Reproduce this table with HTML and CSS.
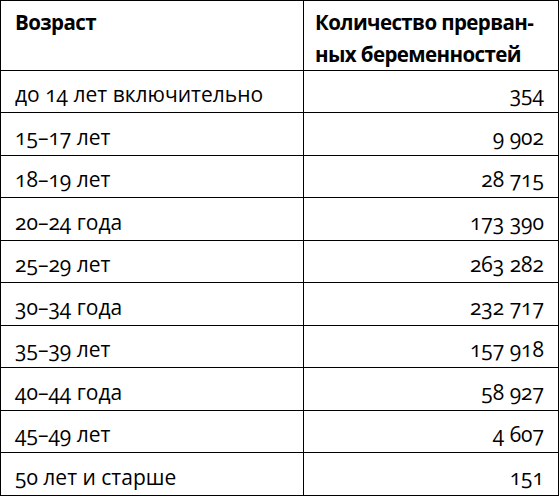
FILE: index.html
```html
<!DOCTYPE html>
<html lang="ru">
<head>
<meta charset="utf-8">
<link rel="stylesheet" href="styles.css">
</head>
<body>
<table class="stats">
  <thead>
    <tr class="head-row">
      <th class="col-age">Возраст</th>
      <th class="col-count">Количество прерван-<br>ных беременностей</th>
    </tr>
  </thead>
  <tbody>
    <tr><td class="age">до 14 лет включительно</td><td class="num">354</td></tr>
    <tr><td class="age">15–17 лет</td><td class="num">9 902</td></tr>
    <tr><td class="age">18–19 лет</td><td class="num">28 715</td></tr>
    <tr><td class="age">20–24 года</td><td class="num">173 390</td></tr>
    <tr><td class="age">25–29 лет</td><td class="num">263 282</td></tr>
    <tr><td class="age">30–34 года</td><td class="num">232 717</td></tr>
    <tr><td class="age">35–39 лет</td><td class="num">157 918</td></tr>
    <tr><td class="age">40–44 года</td><td class="num">58 927</td></tr>
    <tr><td class="age">45–49 лет</td><td class="num">4 607</td></tr>
    <tr><td class="age">50 лет и старше</td><td class="num">151</td></tr>
  </tbody>
</table>
</body>
</html>
```
FILE: styles.css
```css
html, body {
  margin: 0;
  padding: 0;
  background: #fff;
}
body {
  font-family: "Open Sans", "Noto Sans", sans-serif;
  color: #000;
}
.stats {
  border-collapse: collapse;
  width: 559px;
  table-layout: fixed;
  border: 1.5px solid #000;
}
.stats th, .stats td {
  border: 1.2px solid #000;
  padding: 0 14px;
  font-size: 21px;
  text-align: left;
  box-sizing: border-box;
}
.stats .col-age { width: 303px; }
.stats .head-row { height: 70px; }
.stats th {
  font-weight: 700;
  vertical-align: top;
  font-size: 20.5px;
  letter-spacing: -0.6px;
  line-height: 32px;
  padding-top: 5px;
  white-space: nowrap;
}
.stats th.col-count { padding-left: 11px; }
.stats tbody tr { height: 42px; }
.stats tbody tr:nth-child(even) { height: 43px; }
.stats td {
  padding-top: 0;
  padding-bottom: 4px;
  line-height: 28px;
  vertical-align: bottom;
  font-variant-numeric: oldstyle-nums;
  white-space: nowrap;
}
.stats td.num { text-align: right; }
```
